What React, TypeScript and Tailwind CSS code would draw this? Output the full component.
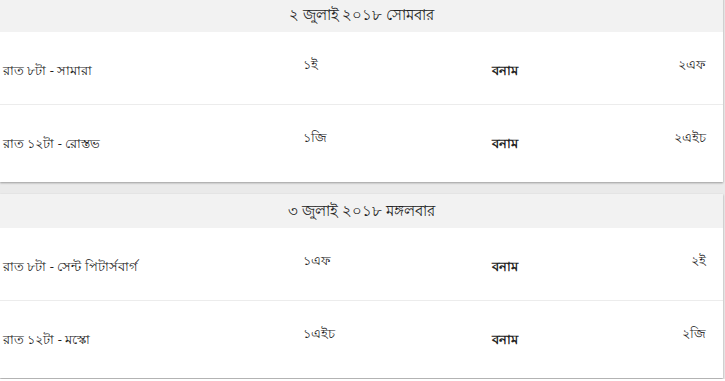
import type { JSX } from "react";

type Match = { time: string; home: string; away: string };

const days: Array<{ date: string; matches: Array<Match> }> = [
    {
        date: "২ জুলাই ২০১৮ সোমবার",
        matches: [
            { time: "রাত ৮টা - সামারা", home: "১ই", away: "২এফ" },
            { time: "রাত ১২টা - রোস্তভ", home: "১জি", away: "২এইচ" },
        ],
    },
    {
        date: "৩ জুলাই ২০১৮ মঙ্গলবার",
        matches: [
            { time: "রাত ৮টা - সেন্ট পিটার্সবার্গ", home: "১এফ", away: "২ই" },
            { time: "রাত ১২টা - মস্কো", home: "১এইচ", away: "২জি" },
        ],
    },
];

function Row({ match, last }: { match: Match; last: boolean }): JSX.Element {
    return (
        <div
            className={
                last
                    ? "grid grid-cols-[300px_189px_1fr_auto] h-[77px] pl-[3px] pr-[17px] pt-[23px]"
                    : "grid grid-cols-[300px_189px_1fr_auto] h-[73px] pl-[3px] pr-[17px] pt-[23px] border-b border-[#ececec]"
            }
        >
            <span className="pt-[6px]">{match.time}</span>
            <span>{match.home}</span>
            <span className="pt-[6px] font-bold">বনাম</span>
            <span className="text-right">{match.away}</span>
        </div>
    );
}

export default function App(): JSX.Element {
    return (
        <div className="min-h-screen bg-[#eaeaea] text-[13px] leading-[18px] text-[#222] font-['Noto_Sans',sans-serif] -mt-[2px]">
            {days.map((day, i) => (
                <div
                    key={day.date}
                    className={
                        i === 0
                            ? "bg-white mr-[2px] shadow-[0_1px_2px_rgba(0,0,0,0.35)]"
                            : "bg-white mr-[2px] mt-[12px] shadow-[0_1px_2px_rgba(0,0,0,0.35)]"
                    }
                >
                    {/* date header */}
                    <div className="flex items-center justify-center h-[34px] pb-[3px] bg-[#f2f2f2] text-[15px]">
                        {day.date}
                    </div>
                    {day.matches.map((m, j) => (
                        <Row key={m.time} match={m} last={j === day.matches.length - 1} />
                    ))}
                </div>
            ))}
        </div>
    );
}
